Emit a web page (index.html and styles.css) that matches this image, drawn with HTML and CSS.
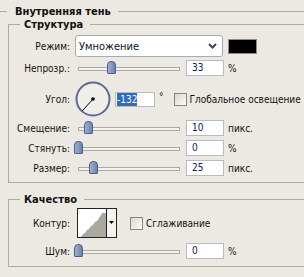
FILE: index.html
```html
<!DOCTYPE html>
<html lang="ru">
<head>
    <meta charset="UTF-8">
    <title>Внутренняя тень</title>
    <link rel="stylesheet" href="styles.css">
</head>
<body>
    <div class="panel">
        <div class="title-line outer-title"><span>Внутренняя тень</span></div>

        <div class="group">
            <div class="title-line group-title"><span>Структура</span></div>

            <div class="row row-mode">
                <span class="label">Режим:</span>
                <div class="select">
                    <span>Умножение</span>
                    <svg class="chevron" width="9" height="6" viewBox="0 0 9 6"><polyline points="1,1 4.5,4.5 8,1" fill="none" stroke="#444" stroke-width="2"/></svg>
                </div>
                <div class="swatch"></div>
            </div>

            <div class="row">
                <span class="label">Непрозр.:</span>
                <div class="slider"><div class="track"><span class="thumb" style="left: 33%"></span></div></div>
                <div class="field">33</div>
                <span class="unit">%</span>
            </div>

            <div class="row row-angle">
                <span class="label">Угол:</span>
                <svg class="dial" width="36" height="36" viewBox="0 0 36 36">
                    <circle cx="18" cy="18" r="16.5" fill="#efeee9" stroke="#5b6b99" stroke-width="2"/>
                    <line x1="18" y1="18" x2="7.3" y2="29.9" stroke="#000" stroke-width="1"/>
                    <circle cx="18" cy="18" r="1.8" fill="#000"/>
                </svg>
                <div class="field field-angle"><span class="selected">-132</span></div>
                <span class="degree">°</span>
                <span class="check check-global"></span>
                <span class="check-label">Глобальное освещение</span>
            </div>

            <div class="row row-distance">
                <span class="label">Смещение:</span>
                <div class="slider"><div class="track"><span class="thumb" style="left: 9.8%"></span></div></div>
                <div class="field">10</div>
                <span class="unit">пикс.</span>
            </div>

            <div class="row">
                <span class="label">Стянуть:</span>
                <div class="slider"><div class="track"><span class="thumb" style="left: 0%"></span></div></div>
                <div class="field">0</div>
                <span class="unit">%</span>
            </div>

            <div class="row">
                <span class="label">Размер:</span>
                <div class="slider"><div class="track"><span class="thumb" style="left: 14.7%"></span></div></div>
                <div class="field">25</div>
                <span class="unit">пикс.</span>
            </div>
        </div>

        <div class="group group-quality">
            <div class="title-line group-title"><span>Качество</span></div>

            <div class="row row-contour">
                <span class="label">Контур:</span>
                <div class="contour">
                    <svg class="contour-preview" width="28" height="28" viewBox="0 0 28 28">
                        <polygon points="3,28 5,25 7,24 9,21 11,20 13,17 15,16 17,13 19,12 21,9 23,6 24,4 28,4 28,28" fill="#a9a99f"/>
                    </svg>
                    <div class="contour-arrow">
                        <svg width="5" height="3" viewBox="0 0 5 3"><polygon points="0,0 5,0 2.5,3" fill="#000"/></svg>
                    </div>
                </div>
                <span class="check check-smooth"></span>
                <span class="check-label">Сглаживание</span>
            </div>

            <div class="row row-noise">
                <span class="label">Шум:</span>
                <div class="slider"><div class="track"><span class="thumb" style="left: 0%"></span></div></div>
                <div class="field">0</div>
                <span class="unit">%</span>
            </div>
        </div>
    </div>
</body>
</html>
```

FILE: styles.css
```css
html, body {
    overflow: hidden;
}

body {
    margin: 0;
    font-family: "DejaVu Sans Condensed", "DejaVu Sans", sans-serif;
    font-size: 10px;
    line-height: 13px;
    color: #111;
    background-color: #ece9e2;
}

.panel {
    width: 304px;
}

/* group headers: line - text - line */
.title-line {
    display: flex;
    align-items: center;
    height: 13px;
    font-size: 11px;
    font-weight: bold;
    white-space: nowrap;
}

.title-line::before,
.title-line::after {
    content: "";
    height: 1px;
    background-color: #aeaba3;
}

.title-line::after {
    flex: 1;
}

.outer-title {
    margin-top: 5px;
}

.outer-title::before {
    width: 7px;
}

.outer-title span {
    margin: 0 7px 0 8px;
}

.group {
    display: flow-root;
    margin: 6px 0 0 8px;
    padding-bottom: 6px;
    border-left: 1px solid #aeaba3;
    border-bottom: 1px solid #aeaba3;
}

.group-title {
    margin-top: -6px;
}

.group-title::before {
    width: 11px;
}

.group-title span {
    margin: 0 7px 0 4px;
}

.group-quality {
    margin-top: 16px;
    padding-bottom: 7px;
}

/* rows */
.row {
    display: flex;
    align-items: center;
    height: 16px;
    margin-top: 4px;
    white-space: nowrap;
}

.row-mode {
    height: 22px;
}

.row-mode + .row {
    margin-top: 3px;
}

.row-angle {
    height: 36px;
    margin-top: 5px;
}

.row-distance {
    margin-top: 3px;
}

.row-contour {
    height: 30px;
    margin-top: 2px;
}

.row-noise {
    margin-top: 5px;
}

.label {
    flex: none;
    width: 61px;
    text-align: right;
}

/* blend mode select */
.select {
    display: flex;
    align-items: center;
    box-sizing: border-box;
    width: 148px;
    height: 22px;
    margin-left: 5px;
    padding-left: 3px;
    font-size: 11px;
    background-color: #fff;
    border: 1px solid #a9aaae;
    border-radius: 3px;
}

.chevron {
    margin-left: auto;
    margin-right: 5px;
}

.swatch {
    box-sizing: border-box;
    width: 29px;
    height: 15px;
    margin-left: 5px;
    background-color: #000;
    border: 1px solid #8a8a86;
}

/* sliders */
.slider {
    flex: none;
    width: 108px;
    height: 16px;
    margin-left: 5px;
}

.track {
    position: relative;
    box-sizing: border-box;
    height: 4px;
    margin: 7px 3px 0;
    background-color: #f3f2ee;
    border: 1px solid #aaa9a2;
}

.thumb {
    position: absolute;
    top: -7px;
    width: 9px;
    height: 13px;
    margin-left: -5px;
    box-sizing: border-box;
    background: linear-gradient(to right, #9fb0d0, #6d82ad);
    border: 1px solid #4e5f8c;
    border-radius: 4px 4px 1px 1px;
}

.field {
    box-sizing: border-box;
    width: 38px;
    height: 16px;
    margin-left: 3px;
    padding-left: 5px;
    line-height: 14px;
    background-color: #fff;
    border: 1px solid #b8bbc2;
    color: #0c1a4a;
}

.unit {
    margin-left: 4px;
}

/* angle */
.dial {
    margin-left: 5px;
}

.field-angle {
    width: 40px;
    height: 15px;
    margin-left: 4px;
    padding-left: 1px;
    line-height: 13px;
}

.selected {
    display: inline-block;
    background-color: #316ac5;
    color: #fff;
}

.degree {
    align-self: flex-start;
    margin: 9px 0 0 4px;
}

.check {
    flex: none;
    box-sizing: border-box;
    width: 13px;
    height: 13px;
    background: linear-gradient(135deg, #d8d7d0, #fdfdfb);
    border: 1px solid #86857e;
}

.check-global {
    margin-left: 10px;
}

.check-smooth {
    margin-left: 13px;
}

.check-label {
    margin-left: 3px;
}

/* contour picker */
.contour {
    display: flex;
    width: 40px;
    height: 30px;
    margin-left: 7px;
    box-sizing: border-box;
    border: 1px solid #222;
}

.contour-preview {
    display: block;
    background-color: #fff;
}

.contour-arrow {
    display: flex;
    justify-content: center;
    padding-top: 12px;
    width: 9px;
    background-color: #f4f3ef;
    border-left: 1px solid #222;
}

.contour-arrow svg {
    display: block;
}
```
